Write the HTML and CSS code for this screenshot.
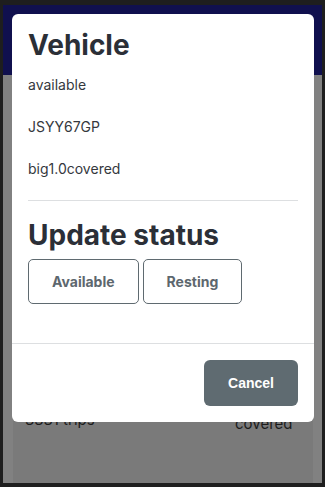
FILE: index.html
```html
<!DOCTYPE html>
<html lang="en">
<head>
    <meta charset="UTF-8">
    <meta name="viewport" content="width=device-width, initial-scale=1.0">
    <title>Vehicle</title>
    <link rel="stylesheet" href="styles.css">
</head>
<body>
    <div class="app">
        <header class="topbar"></header>
        <div class="main">
            <div class="content">
                <div class="row">
                    <span class="trips">3331 trips</span>
                    <span class="size">big1.0 covered</span>
                </div>
            </div>
        </div>
    </div>

    <div class="modal">
        <div class="modal-body">
            <h2>Vehicle</h2>
            <p>available</p>
            <p>JSYY67GP</p>
            <p>big1.0covered</p>
            <hr>
            <h2>Update status</h2>
            <div class="status-buttons">
                <button class="btn-outline">Available</button>
                <button class="btn-outline">Resting</button>
            </div>
        </div>
        <div class="modal-footer">
            <button class="btn-cancel">Cancel</button>
        </div>
    </div>
</body>
</html>
```

FILE: styles.css
```css
html, body {
    margin: 0;
    height: 487px;
    overflow: hidden;
}
body {
    background: #1e1e1e;
    padding: 5px 3px 4px 3px;
    box-sizing: border-box;
    font-family: Inter, "Liberation Sans", sans-serif;
}
.app {
    height: 100%;
    display: flex;
    flex-direction: column;
    background: #818181;
}
.topbar {
    height: 70px;
    background: #10104e;
}
.main {
    flex: 1;
    display: flex;
    padding: 0 9px 0 10px;
}
.content {
    flex: 1;
    background: #7a7a7a;
    padding: 330px 23px 0 12px;
}
.row {
    display: flex;
    justify-content: space-between;
    align-items: flex-start;
    color: #1c1c1c;
    font-size: 15px;
}
.trips {
    margin-top: 5px;
}
.size {
    width: 55px;
    margin-top: -14px;
    line-height: 22px;
}

.modal {
    position: fixed;
    left: 12px;
    top: 14px;
    width: 302px;
    background: #fff;
    border-radius: 6px;
}
.modal-body {
    padding: 14px 16px 39px;
}
h2 {
    margin: 0;
    font-size: 28px;
    line-height: 34px;
    font-weight: 700;
    color: #2b2f37;
}
p {
    margin: 12px 0 21px;
    font-size: 14px;
    line-height: 21px;
    color: #35383d;
}
p + p {
    margin-top: 0;
}
hr {
    margin: 0 0 17px;
    border: none;
    border-top: 1px solid #dddfe1;
}
.status-buttons {
    display: flex;
    gap: 4px;
    margin-top: 7px;
}
.btn-outline {
    height: 45px;
    padding: 0 23px;
    background: #fff;
    border: 1px solid #5f6a70;
    border-radius: 5px;
    font-family: Inter, "Liberation Sans", sans-serif;
    font-size: 14px;
    font-weight: 700;
    color: #5d676e;
}
.modal-footer {
    display: flex;
    justify-content: flex-end;
    padding: 16px;
    border-top: 1px solid #dddfe1;
}
.btn-cancel {
    height: 46px;
    padding: 0 24px;
    background: #5f6b71;
    border: none;
    border-radius: 6px;
    font-family: "Liberation Sans", Arial, sans-serif;
    font-size: 14px;
    font-weight: 700;
    color: #fff;
}
```
